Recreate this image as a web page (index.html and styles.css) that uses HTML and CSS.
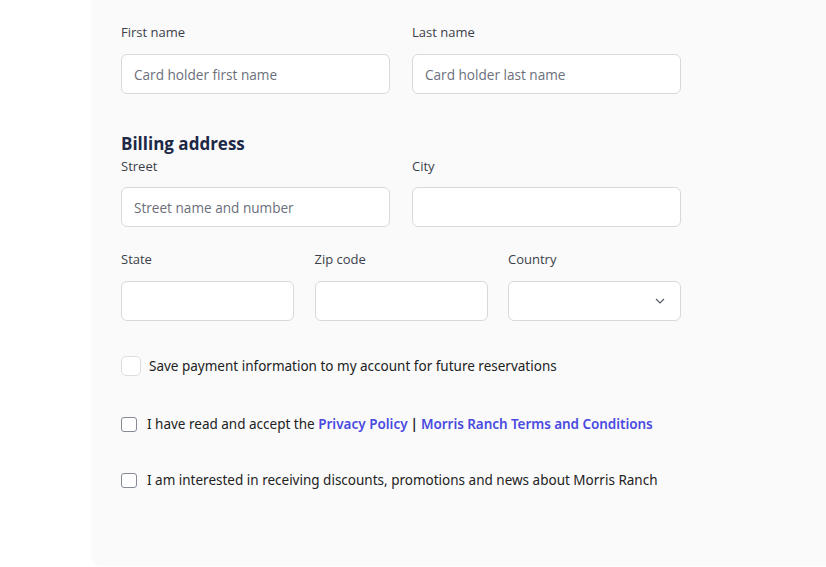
FILE: index.html
```html
<!DOCTYPE html>
<html>
<head>
<meta charset="utf-8">
<link rel="stylesheet" href="styles.css">
</head>
<body>
<div class="panel">
  <div class="row two">
    <div class="field">
      <div class="label">First name</div>
      <div class="input"><span class="ph">Card holder first name</span></div>
    </div>
    <div class="field">
      <div class="label">Last name</div>
      <div class="input"><span class="ph">Card holder last name</span></div>
    </div>
  </div>

  <h2 class="heading">Billing address</h2>
  <div class="row two">
    <div class="field">
      <div class="label label-tight">Street</div>
      <div class="input"><span class="ph">Street name and number</span></div>
    </div>
    <div class="field">
      <div class="label label-tight">City</div>
      <div class="input"></div>
    </div>
  </div>

  <div class="row three">
    <div class="field">
      <div class="label">State</div>
      <div class="input"></div>
    </div>
    <div class="field">
      <div class="label">Zip code</div>
      <div class="input"></div>
    </div>
    <div class="field">
      <div class="label">Country</div>
      <div class="input select">
        <svg class="chev" width="10" height="6" viewBox="0 0 10 6"><path d="M1 1l4 4 4-4" fill="none" stroke="#555b66" stroke-width="1.2"/></svg>
      </div>
    </div>
  </div>

  <div class="check check-save">
    <span class="box-soft"></span>
    <span class="ctext">Save payment information to my account for future reservations</span>
  </div>
  <div class="check check-terms">
    <span class="box"></span>
    <span class="ctext">I have read and accept the <a class="link">Privacy Policy</a><span class="sep">|</span><a class="link link-tight">Morris Ranch Terms and Conditions</a></span>
  </div>
  <div class="check check-news">
    <span class="box"></span>
    <span class="ctext">I am interested in receiving discounts, promotions and news about Morris Ranch</span>
  </div>
</div>
</body>
</html>
```

FILE: styles.css
```css
html, body {
  margin: 0;
  padding: 0;
  background: #ffffff;
}
body {
  width: 826px;
  height: 567px;
  overflow: hidden;
}
.panel {
  margin-left: 91px;
  height: 544px;
  background: #fafafa;
  border-radius: 0 0 0 9px;
  padding: 22px 30px 0 30px;
  font-family: "Open Sans", "Noto Sans", sans-serif;
}
.row {
  display: grid;
}
.row.two {
  grid-template-columns: 269px 269px;
  column-gap: 22px;
}
.row.three {
  width: 560px;
  grid-template-columns: 173px 173px 173px;
  justify-content: space-between;
  margin-top: 22px;
}
.label {
  font-size: 13px;
  line-height: 20px;
  color: #3b3f4a;
  margin-bottom: 12px;
}
.label-tight {
  margin-bottom: 11px;
}
.input {
  box-sizing: border-box;
  height: 40px;
  background: #ffffff;
  border: 1px solid #d8d9de;
  border-radius: 6px;
  display: flex;
  align-items: center;
  padding-left: 12px;
}
.ph {
  font-size: 13.6px;
  color: #6b6f7b;
}
.select {
  justify-content: flex-end;
  padding-right: 15px;
}
.chev {
  display: block;
}
.heading {
  margin: 38px 0 0 0;
  font-size: 17px;
  line-height: 24px;
  font-weight: 700;
  color: #1d2846;
}
.check {
  display: flex;
  align-items: center;
  font-family: "Noto Sans", "Open Sans", sans-serif;
  font-size: 13.5px;
  color: #222222;
  line-height: 20px;
}
.check-save {
  margin-top: 35px;
}
.check-terms {
  margin-top: 38px;
}
.check-news {
  margin-top: 36px;
}
.box-soft {
  box-sizing: border-box;
  width: 20px;
  height: 20px;
  border: 1px solid #dcdde2;
  border-radius: 5px;
  background: #ffffff;
  margin-right: 8px;
}
.box {
  box-sizing: border-box;
  width: 16px;
  height: 15px;
  border: 1px solid #858a94;
  border-radius: 3px;
  background: #ffffff;
  margin: 0 10px 0 0;
}
.sep {
  margin: 0 3px 0 3px;
  color: #111111;
  font-weight: 600;
}
.link {
  color: #4a4ae0;
  font-weight: 600;
}
.link-tight {
  letter-spacing: -0.06px;
}
```
